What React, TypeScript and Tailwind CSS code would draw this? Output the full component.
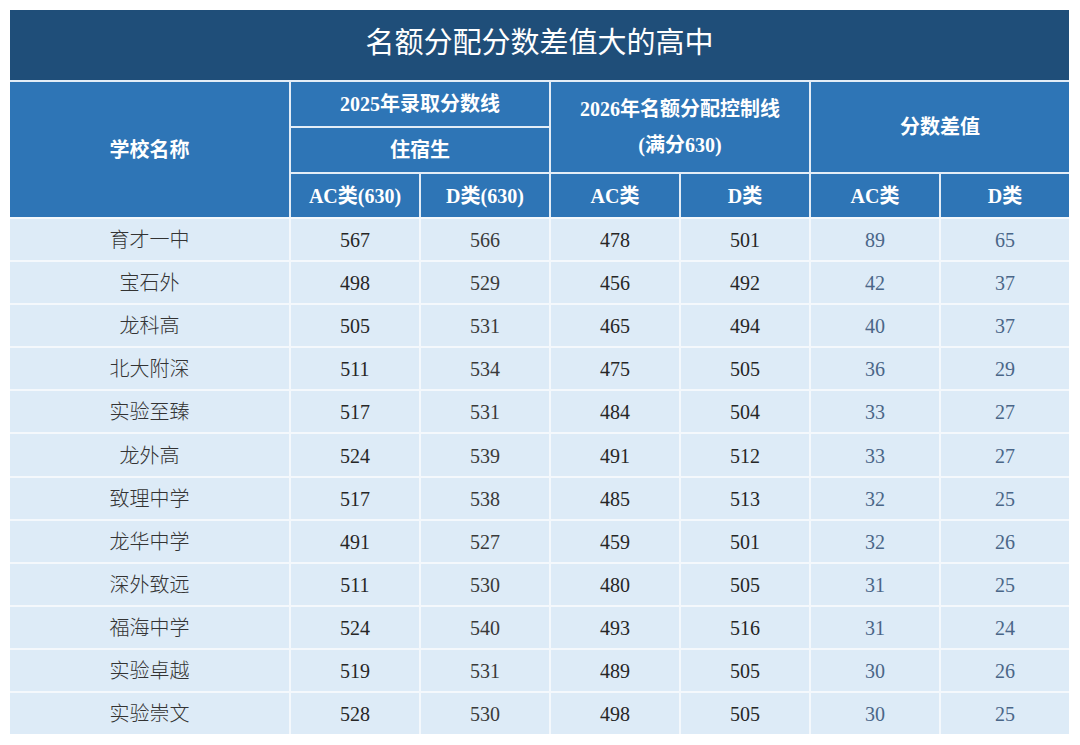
import React from "react";

const rows: [string, number, number, number, number, number, number][] = [
  ["育才一中", 567, 566, 478, 501, 89, 65],
  ["宝石外", 498, 529, 456, 492, 42, 37],
  ["龙科高", 505, 531, 465, 494, 40, 37],
  ["北大附深", 511, 534, 475, 505, 36, 29],
  ["实验至臻", 517, 531, 484, 504, 33, 27],
  ["龙外高", 524, 539, 491, 512, 33, 27],
  ["致理中学", 517, 538, 485, 513, 32, 25],
  ["龙华中学", 491, 527, 459, 501, 32, 26],
  ["深外致远", 511, 530, 480, 505, 31, 25],
  ["福海中学", 524, 540, 493, 516, 31, 24],
  ["实验卓越", 519, 531, 489, 505, 30, 26],
  ["实验崇文", 528, 530, 498, 505, 30, 25],
];

const font = { fontFamily: '"Liberation Serif", "Noto Sans CJK SC", serif' };

export default function App() {
  return (
    <div className="w-[1080px] h-[745px] bg-white pt-[10px] pl-[10px]" style={font}>
      <div className="w-[1059px] bg-[#e3edf7]">
        <div className="h-[72px] bg-[#1f4e79] text-white text-[29px] flex items-center justify-center pb-[2px] border-b-2 border-[#e3edf7]">
          名额分配分数差值大的高中
        </div>
        <div className="grid grid-cols-[279px_repeat(6,1fr)] grid-rows-[44px_44px_43px] gap-[2px] text-white text-[20px] font-bold bg-[#e3edf7]">
          <div className="row-span-3 bg-[#2e75b6] flex items-center justify-center">学校名称</div>
          <div className="col-span-2 bg-[#2e75b6] flex items-center justify-center">2025年录取分数线</div>
          <div className="col-span-2 row-span-2 bg-[#2e75b6] flex flex-col items-center justify-center leading-[36px]">
            <span>2026年名额分配控制线</span>
            <span>(满分630)</span>
          </div>
          <div className="col-span-2 row-span-2 bg-[#2e75b6] flex items-center justify-center">分数差值</div>
          <div className="col-span-2 bg-[#2e75b6] flex items-center justify-center">住宿生</div>
          <div className="bg-[#2e75b6] flex items-center justify-center">AC类(630)</div>
          <div className="bg-[#2e75b6] flex items-center justify-center">D类(630)</div>
          <div className="bg-[#2e75b6] flex items-center justify-center">AC类</div>
          <div className="bg-[#2e75b6] flex items-center justify-center">D类</div>
          <div className="bg-[#2e75b6] flex items-center justify-center">AC类</div>
          <div className="bg-[#2e75b6] flex items-center justify-center">D类</div>
        </div>
        <div className="grid grid-cols-[279px_repeat(6,1fr)] auto-rows-[41.1px] gap-[2px] pt-[2px] text-[20px] bg-[#f4f8fc]">
          {rows.map((r) => (
            <React.Fragment key={r[0]}>
              <div className="bg-[#ddebf7] text-[#333] font-light flex items-center justify-center pt-[1px]">{r[0]}</div>
              <div className="bg-[#ddebf7] text-[#262626] flex items-center justify-center pt-[1px]">{r[1]}</div>
              <div className="bg-[#ddebf7] text-[#3a3a3a] flex items-center justify-center pt-[1px]">{r[2]}</div>
              <div className="bg-[#ddebf7] text-[#262626] flex items-center justify-center pt-[1px]">{r[3]}</div>
              <div className="bg-[#ddebf7] text-[#262626] flex items-center justify-center pt-[1px]">{r[4]}</div>
              <div className="bg-[#ddebf7] text-[#4a6688] flex items-center justify-center pt-[1px]">{r[5]}</div>
              <div className="bg-[#ddebf7] text-[#4a6688] flex items-center justify-center pt-[1px]">{r[6]}</div>
            </React.Fragment>
          ))}
        </div>
      </div>
    </div>
  );
}
